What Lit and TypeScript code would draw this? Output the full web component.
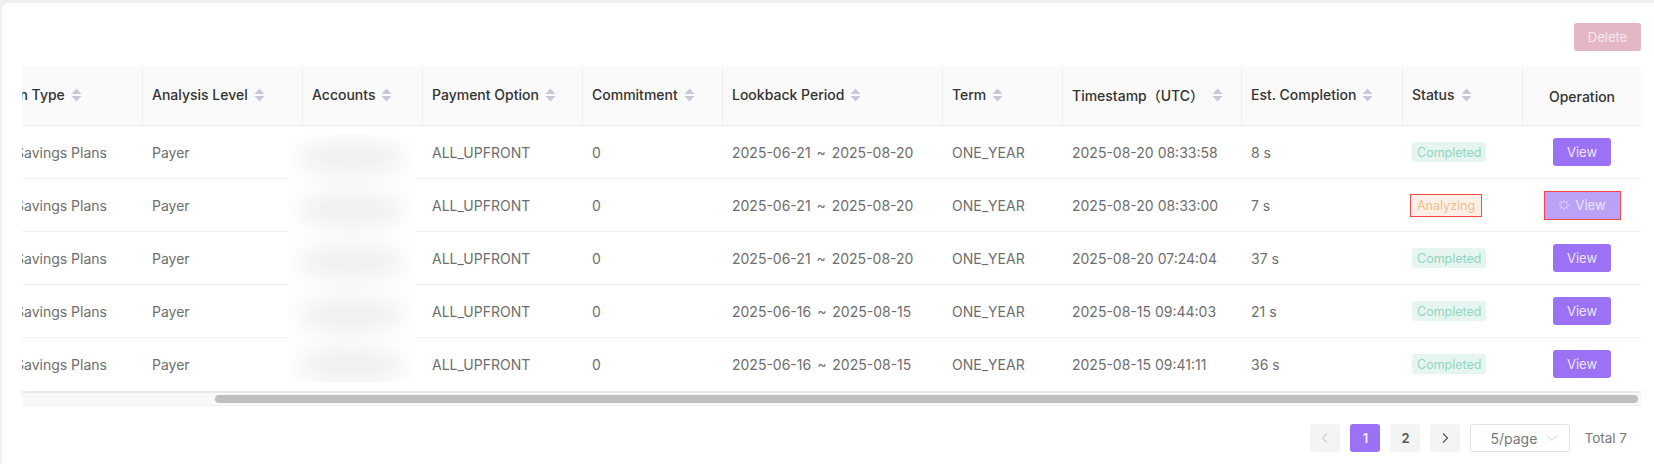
import { LitElement, html, css, svg } from "lit";
import { customElement } from "lit/decorators.js";

interface Row { lookback: string; ts: string; est: string; analyzing?: boolean }
const ROWS: Row[] = [
  { lookback: "2025-06-21 ~ 2025-08-20", ts: "2025-08-20 08:33:58", est: "8 s" },
  { lookback: "2025-06-21 ~ 2025-08-20", ts: "2025-08-20 08:33:00", est: "7 s", analyzing: true },
  { lookback: "2025-06-21 ~ 2025-08-20", ts: "2025-08-20 07:24:04", est: "37 s" },
  { lookback: "2025-06-16 ~ 2025-08-15", ts: "2025-08-15 09:44:03", est: "21 s" },
  { lookback: "2025-06-16 ~ 2025-08-15", ts: "2025-08-15 09:41:11", est: "36 s" },
];
const HEADERS = ["Analysis Level", "Accounts", "Payment Option", "Commitment", "Lookback Period", "Term", "Timestamp（UTC）", "Est. Completion", "Status"];
const WIDTHS = [181, 160, 120, 160, 140, 220, 120, 179, 161, 120, 118];

const sortIcon = html`<svg class="sort" width="11" height="14" viewBox="0 0 11 14"><path d="M5.5 .5 10.5 6H.5z M.5 8h10L5.5 13.5z" fill="#c6c8d6"/></svg>`;
const spinner = html`<svg class="spin" width="12" height="12" viewBox="0 0 12 12" stroke="#e4dafc" stroke-width="1.2" fill="none">
  ${[0, 45, 90, 135, 180, 225, 270, 315].map((a) => svg`<line x1="6" y1="1" x2="6" y2="3.4" transform="rotate(${a} 6 6)"/>`)}
</svg>`;

@customElement("app-root")
export class AppRoot extends LitElement {
  static styles = css`
    :host { display: block; height: 464px; box-sizing: border-box; background: #f0f0f3; padding: 3px 0 0 2px; font-family: Inter, "Noto Sans CJK SC", sans-serif; font-size: 14px; color: #6e6e6e; overflow: hidden; }
    .card { background: #fff; border-radius: 6px 0 0 0; height: 461px; box-sizing: border-box; padding: 20px 13px 0 20px; }
    .toolbar { display: flex; justify-content: flex-end; height: 44px; align-items: flex-start; }
    .delete { width: 67px; height: 28px; background: #e4b7c6; color: #f7e9ee; font-size: 13px; border-radius: 3px; display: flex; align-items: center; justify-content: center; }
    .wrap { position: relative; overflow: hidden; }
    table { border-collapse: separate; border-spacing: 0; table-layout: fixed; width: 1679px; margin-left: -60px; }
    th { height: 59px; box-sizing: border-box; background: #fafafa; color: #333; font-weight: 500; text-align: left; padding: 0 10px 3px 9px; border-right: 1px solid #eeeef2; border-bottom: 1px solid #ebebf2; white-space: nowrap; }
    th:last-child { border-right: 0; text-align: center; padding: 0 10px; }
    th .inner { display: flex; align-items: center; gap: 6px; }
    th.wide .inner { gap: 8px; }
    th.first { padding-left: 37px; }
    td { height: 53px; box-sizing: border-box; padding: 0 10px 0 9px; border-bottom: 1px solid #f0f0f6; white-space: nowrap; }
    td.first { padding-left: 53px; }
    td.dates { word-spacing: 2px; }
    td:last-child { text-align: center; padding: 0 10px; }
    tr:last-child td { border-bottom-color: transparent; }
    .tag { display: inline-flex; align-items: center; height: 20px; padding: 0 5px; font-size: 12.5px; border-radius: 3px; background: #e6f5f0; color: #8fd7bf; vertical-align: middle; }
    .tag.busy { background: #fcf0e6; color: #efbf8f; height: 23px; padding: 0 6px; margin-left: -2px; border: 1px solid #f44; border-radius: 0; box-sizing: border-box; }
    .view { display: inline-flex; align-items: center; justify-content: center; gap: 5px; width: 58px; height: 28px; background: #9b72f6; color: #ece5fd; font-size: 13px; border-radius: 3px; vertical-align: middle; }
    .view.busy { width: 77px; height: 29px; background: #bba2f8; border: 1px solid #f44; border-radius: 0; box-sizing: border-box; }
    .mask { position: absolute; left: 266px; top: 68px; width: 127px; height: 247px; background: #fff; overflow: hidden; }
    .blob { position: absolute; left: 8px; width: 110px; height: 34px; background: #efefef; border-radius: 50%; filter: blur(11px); }
    .scroll { height: 15px; box-sizing: border-box; border-top: 2px solid #e9e9f1; border-bottom: 1px solid #efeff4; background: #f8f8f8; display: flex; padding-left: 193px; padding-right: 3px; padding-top: 2px; }
    .thumb { flex: 1; height: 8px; background: #bfbfbf; border-radius: 4px; }
    .pager { display: flex; justify-content: flex-end; align-items: center; gap: 10px; margin-top: 18px; padding-right: 1px; }
    .pg { width: 30px; height: 28px; border-radius: 3px; background: #f4f4f5; color: #555; display: flex; align-items: center; justify-content: center; font-size: 13px; font-weight: 600; }
    .pg.on { background: #9b72f6; color: #f3eefe; }
    .sel { width: 100px; height: 28px; box-sizing: border-box; border: 1px solid #e2e2ec; border-radius: 3px; display: flex; align-items: center; justify-content: space-between; padding: 0 11px 0 19px; font-size: 14px; color: #777; }
    .total { font-size: 13.5px; color: #777; margin-left: 4px; margin-right: 13px; }
  `;

  render() {
    return html`<div class="card">
      <div class="toolbar"><div class="delete">Delete</div></div>
      <div class="wrap">
        <table>
          <colgroup>${WIDTHS.map((w) => html`<col style="width:${w}px" />`)}</colgroup>
          <thead><tr>
            <th class="first"><div class="inner">Plan Type${sortIcon}</div></th>
            ${HEADERS.map((h) => html`<th class=${h.startsWith("Timestamp") ? "wide" : ""}><div class="inner">${h}${sortIcon}</div></th>`)}
            <th>Operation</th>
          </tr></thead>
          <tbody>
            ${ROWS.map((r) => html`<tr>
              <td class="first">Savings Plans</td>
              <td>Payer</td>
              <td></td>
              <td>ALL_UPFRONT</td>
              <td>0</td>
              <td class="dates">${r.lookback}</td>
              <td>ONE_YEAR</td>
              <td>${r.ts}</td>
              <td>${r.est}</td>
              <td>${r.analyzing ? html`<span class="tag busy">Analyzing</span>` : html`<span class="tag">Completed</span>`}</td>
              <td>${r.analyzing ? html`<span class="view busy">${spinner}View</span>` : html`<span class="view">View</span>`}</td>
            </tr>`)}
          </tbody>
        </table>
        <div class="mask">
          ${[6, 58, 110, 163, 213].map((t) => html`<div class="blob" style="top:${t}px"></div>`)}
        </div>
        <div class="scroll"><div class="thumb"></div></div>
      </div>
      <div class="pager">
        <div class="pg"><svg width="10" height="12" viewBox="0 0 10 12" fill="none" stroke="#cfcfd4" stroke-width="1.2"><path d="M7 1.5 2.5 6 7 10.5"/></svg></div>
        <div class="pg on">1</div>
        <div class="pg">2</div>
        <div class="pg"><svg width="10" height="12" viewBox="0 0 10 12" fill="none" stroke="#555" stroke-width="1.2"><path d="M3 1.5 7.5 6 3 10.5"/></svg></div>
        <div class="sel">5/page<svg width="12" height="8" viewBox="0 0 12 8" fill="none" stroke="#d3d3da"><path d="M1 1.5 6 6.5 11 1.5"/></svg></div>
        <div class="total">Total 7</div>
      </div>
    </div>`;
  }
}
